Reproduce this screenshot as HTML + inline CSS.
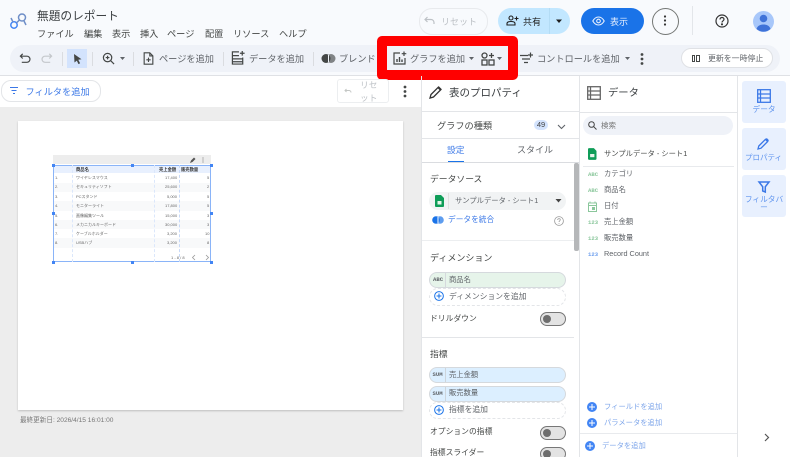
<!DOCTYPE html>
<html lang="ja"><head><meta charset="utf-8"><title>無題のレポート</title>
<style>
html,body{margin:0;padding:0;background:#fff}
body{width:790px;height:457px;overflow:hidden;position:relative;font-family:"Liberation Sans","Noto Sans CJK JP",sans-serif;color:#444746}
#w{position:absolute;left:0;top:0;width:790px;height:457px;overflow:hidden;background:#fff;filter:blur(.3px)}
.a{position:absolute}
.t{position:absolute;white-space:nowrap;line-height:14px;font-size:9.200px;color:#5f6368}
svg{position:absolute;overflow:visible}
.chip{position:absolute;left:429px;width:135px;height:14px;border-radius:8px;border:1px solid #d5d9dd}
.sw{position:absolute;left:540px;width:24px;height:12px;border-radius:7px;background:#e3e3e3;border:1px solid #777}
.sw i{position:absolute;left:2px;top:2px;width:8px;height:8px;border-radius:50%;background:#6e6e6e}
.row{position:absolute;left:53px;width:158px;height:9.500px}
.c{position:absolute;font-size:4px;line-height:9px;color:#666;white-space:nowrap}
.m{top:26.500px;color:#444746}
.f{font-size:7.300px}
.g{font-size:7.800px;color:#444746}
.k{font-size:5.600px;font-weight:bold;font-family:"Liberation Mono",monospace}
</style></head><body><div id="w">
<!-- header -->
<div class="a" style="left:0;top:0;width:790px;height:75px;background:#f8fafd"></div>
<div class="a" style="left:0;top:75px;width:790px;height:1px;background:#dfe1e5"></div>
<div class="a" style="left:10px;top:45px;width:770px;height:27px;border-radius:14px;background:#eff2f8"></div>
<svg style="left:10px;top:13px" width="17" height="16" viewBox="0 0 17 16" fill="none" stroke-width="1.500"><circle cx="4" cy="12" r="3.200" stroke="#4285f4"/><circle cx="12" cy="4.500" r="3.500" stroke="#6f8fc8"/><path d="M6.500 9.800L9.500 7" stroke="#6f8fc8"/><path d="M1 5l2 4M14 8l2 4" stroke="#6f8fc8"/></svg>
<div class="t" style="left:37px;top:10px;font-size:11.700px;color:#3c4043">無題のレポート</div>
<div class="t m" style="left:37px">ファイル</div>
<div class="t m" style="left:84px">編集</div>
<div class="t m" style="left:112px">表示</div>
<div class="t m" style="left:140px">挿入</div>
<div class="t m" style="left:167px">ページ</div>
<div class="t m" style="left:205px">配置</div>
<div class="t m" style="left:233px">リソース</div>
<div class="t m" style="left:279px">ヘルプ</div>

<!-- toolbar left -->
<svg style="left:19px;top:52px" width="13" height="13" viewBox="0 0 14 14" fill="none" stroke="#444746" stroke-width="1.300"><path d="M4 2L1.500 4.500 4 7M2 4.500h6.500a3.300 3.300 0 0 1 0 6.600H3"/></svg>
<svg style="left:40px;top:52px" width="13" height="13" viewBox="0 0 14 14" fill="none" stroke="#c4c7cb" stroke-width="1.300"><path d="M10 2l2.500 2.500L10 7M12 4.500H5.500a3.300 3.300 0 0 0 0 6.600H11"/></svg>
<div class="a" style="left:61.500px;top:52px;width:1px;height:14px;background:#dadce0"></div>
<div class="a" style="left:67px;top:49px;width:20px;height:19px;background:#d3e3fd"></div>
<svg style="left:73px;top:53px" width="10" height="12" viewBox="0 0 10 12"><path d="M1 1l7.500 5.200-3.200.6 1.800 3.500-1.600.8-1.700-3.500L1.500 9.500z" fill="#444746"/></svg>
<div class="a" style="left:92px;top:52px;width:1px;height:14px;background:#dadce0"></div>
<svg style="left:102px;top:52px" width="13" height="13" viewBox="0 0 14 14" fill="none" stroke="#444746" stroke-width="1.300"><circle cx="6" cy="6" r="4.500"/><path d="M9.500 9.500l3.500 3.500M4 6h4M6 4v4"/></svg>
<svg style="left:119px;top:56px" width="7" height="5" viewBox="0 0 7 5"><path d="M1 1h5L3.500 4z" fill="#5f6368"/></svg>
<div class="a" style="left:133px;top:52px;width:1px;height:14px;background:#dadce0"></div>
<svg style="left:143px;top:52px" width="11" height="13" viewBox="0 0 12 15" fill="none" stroke="#444746" stroke-width="1.300"><path d="M1 1h6.500L11 4.500V14H1zM7.500 1v3.500H11M6 6.500v5M3.500 9h5"/></svg>
<div class="t" style="left:159px;top:51.500px">ページを追加</div>
<div class="a" style="left:223px;top:52px;width:1px;height:14px;background:#dadce0"></div>
<svg style="left:231px;top:50px" width="15" height="15" viewBox="0 0 15 16" fill="none" stroke="#444746" stroke-width="1.300"><path d="M8 2H1v13h11V8M1 6h7M1 9.500h11M1 12.500h11M11.500 1v5M9 3.500h5"/></svg>
<div class="t" style="left:249px;top:51.500px">データを追加</div>
<div class="a" style="left:313px;top:52px;width:1px;height:14px;background:#dadce0"></div>
<svg style="left:321px;top:53px" width="15" height="11" viewBox="0 0 15 11"><circle cx="5" cy="5.500" r="4.500" fill="#444746"/><circle cx="10" cy="5.500" r="4.500" fill="#444746" opacity=".65"/><path d="M7.500 2v7" stroke="#f0f4f9" stroke-width="1"/></svg>
<div class="t" style="left:339px;top:51.500px">ブレンド</div>

<!-- highlight -->
<div class="a" style="left:377px;top:36px;width:141px;height:44px;background:#f00;border-radius:5px"></div>
<div class="a" style="left:387px;top:46px;width:121px;height:24px;background:#eff2f8"></div>
<svg style="left:393px;top:51px" width="14" height="14" viewBox="0 0 14 14" fill="none" stroke="#444746" stroke-width="1.200"><path d="M7 2H1v11h11V7M11 .5v4.500M8.700 2.700h4.600"/><path d="M4 11V8M6.500 11V6M9 11V8.500" stroke-width="1.400"/></svg>
<div class="t" style="left:410px;top:51.500px">グラフを追加</div>
<svg style="left:468px;top:56px" width="7" height="5" viewBox="0 0 7 5"><path d="M1 1h5L3.500 4z" fill="#5f6368"/></svg>
<svg style="left:481px;top:52px" width="14" height="14" viewBox="0 0 14 14" fill="none" stroke="#444746" stroke-width="1.300"><circle cx="3.500" cy="3.500" r="2.500"/><rect x="1" y="8" width="5" height="5"/><rect x="8" y="8" width="5" height="5"/><path d="M10.500 1v5M8 3.500h5"/></svg>
<svg style="left:496px;top:56px" width="7" height="5" viewBox="0 0 7 5"><path d="M1 1h5L3.500 4z" fill="#5f6368"/></svg>

<!-- toolbar right -->
<svg style="left:519px;top:51px" width="14" height="14" viewBox="0 0 14 14" fill="none" stroke="#444746" stroke-width="1.200"><path d="M1 4.500h8M3 8h8M5 11.500h4M11.500 1.500v5M9 4h5"/></svg>
<div class="t" style="left:537px;top:51.500px">コントロールを追加</div>
<svg style="left:624px;top:56px" width="7" height="5" viewBox="0 0 7 5"><path d="M1 1h5L3.500 4z" fill="#5f6368"/></svg>
<svg style="left:640px;top:52px" width="4" height="14" viewBox="0 0 4 14" fill="#444746"><circle cx="2" cy="2.500" r="1.400"/><circle cx="2" cy="7" r="1.400"/><circle cx="2" cy="11.500" r="1.400"/></svg>
<div class="a" style="left:681px;top:48px;width:90px;height:18px;border-radius:11px;background:#fff;border:1px solid #dfe1e5"></div>
<div class="a" style="left:691.500px;top:55px;width:1.500px;height:5px;border:1px solid #444746"></div>
<div class="a" style="left:696px;top:55px;width:1.500px;height:5px;border:1px solid #444746"></div>
<div class="t" style="left:708px;top:52px;font-size:7.900px;color:#5f6368">更新を一時停止</div>

<!-- header right -->
<div class="a" style="left:419px;top:8px;width:67px;height:25px;border-radius:13px;border:1px solid #e8eaed"></div>
<svg style="left:424px;top:16px" width="11" height="9" viewBox="0 0 11 9" fill="none" stroke="#bdc1c6" stroke-width="1.200"><path d="M3.500 1L1 3.500 3.500 6M1.500 3.500H7a3 3 0 0 1 3 3V8"/></svg>
<div class="t" style="left:441px;top:15px;color:#bdc1c6;font-size:9px">リセット</div>
<div class="a" style="left:498px;top:8px;width:72px;height:26px;border-radius:13px;background:#c2e7ff"></div>
<div class="a" style="left:549px;top:8px;width:1px;height:26px;background:#b3dcf5"></div>
<svg style="left:506px;top:15px" width="13" height="11" viewBox="0 0 13 11" fill="none" stroke="#1f1f1f" stroke-width="1.100"><circle cx="5" cy="3" r="2"/><path d="M1 10V8.500C1 7 3 6.500 5 6.500S9 7 9 8.500V10zM10.500 1.500v4M8.500 3.500h4"/></svg>
<div class="t" style="left:523px;top:14.500px;color:#1f1f1f;font-size:9px">共有</div>
<svg style="left:555px;top:19px" width="8" height="5" viewBox="0 0 8 5"><path d="M1 .5h6L4 4z" fill="#1f1f1f"/></svg>
<div class="a" style="left:581px;top:8px;width:63px;height:26px;border-radius:13px;background:#1a73e8"></div>
<svg style="left:592px;top:16px" width="13" height="10" viewBox="0 0 13 10" fill="none" stroke="#e8f0fe" stroke-width="1.100"><path d="M.8 5C2.500 2 4.500 1 6.500 1s4 1 5.700 4c-1.700 3-3.700 4-5.700 4S2.500 8 .8 5z"/><circle cx="6.500" cy="5" r="1.800"/></svg>
<div class="t" style="left:610px;top:14.500px;color:#e8f0fe;font-size:9px">表示</div>
<div class="a" style="left:652px;top:8px;width:25px;height:25px;border-radius:50%;border:1px solid #747775"></div>
<svg style="left:663px;top:15px" width="4" height="11" viewBox="0 0 4 11" fill="#333"><circle cx="2" cy="1.500" r="1.100"/><circle cx="2" cy="5.500" r="1.100"/><circle cx="2" cy="9.500" r="1.100"/></svg>
<div class="a" style="left:692px;top:6px;width:1px;height:29px;background:#e3e6ea"></div>
<svg style="left:715px;top:14px" width="14" height="14" viewBox="0 0 14 14" fill="none" stroke="#333" stroke-width="1.200"><circle cx="7" cy="7" r="6"/><path d="M5 5.500C5 4 6 3.500 7 3.500S9 4.200 9 5.300C9 6.800 7 6.800 7 8.500"/><circle cx="7" cy="10.300" r=".5" fill="#333"/></svg>
<svg style="left:753px;top:11px" width="21" height="21" viewBox="0 0 21 21"><circle cx="10.500" cy="10.500" r="10.500" fill="#a8c7fa"/><circle cx="10.500" cy="7.500" r="3.800" fill="#3f72d8"/><path d="M3.500 18c1-3.500 4-4.500 7-4.500s6 1 7 4.500a10.500 10.500 0 0 1-14 0z" fill="#3f72d8"/></svg>

<!-- filter bar -->
<div class="a" style="left:1px;top:80px;width:98px;height:20px;border-radius:10px;border:1px solid #e3e5e8;background:#fff"></div>
<svg style="left:9px;top:86px" width="10" height="9" viewBox="0 0 10 9" fill="none" stroke="#3b78e7" stroke-width="1.100"><path d="M1 1.500h8M2.500 4.500h5M4 7.500h2"/></svg>
<div class="t" style="left:25.500px;top:84.500px;color:#3b78e7">フィルタを追加</div>
<div class="a" style="left:337px;top:79px;width:50px;height:22px;border:1px solid #eceef0;border-radius:3px"></div>
<svg style="left:344px;top:88px" width="8" height="6" viewBox="0 0 8 6" fill="none" stroke="#c4c7c5" stroke-width="1"><path d="M2.500 1L1 2.500 2.500 4M1 2.500h4a2 2 0 0 1 2 2"/></svg>
<div class="t" style="left:360px;top:79px;color:#bdc1c6;font-size:8.700px;line-height:13px;width:19px;white-space:normal">リセット</div>
<svg style="left:403px;top:85px" width="4" height="13" viewBox="0 0 4 13" fill="#444746"><circle cx="2" cy="2" r="1.400"/><circle cx="2" cy="6.500" r="1.400"/><circle cx="2" cy="11" r="1.400"/></svg>

<!-- canvas -->
<div class="a" style="left:0;top:107px;width:421px;height:350px;background:#ededed"></div>
<div class="a" style="left:18px;top:121px;width:385px;height:289px;background:#fff;box-shadow:0 1px 2px rgba(0,0,0,.2)"></div>
<div class="t" style="left:20px;top:414px;font-size:6.600px;color:#777">最終更新日: 2026/4/15 16:01:00</div>

<!-- table -->
<div class="a" style="left:53px;top:155px;width:158px;height:9px;background:#ededed"></div>
<svg style="left:190px;top:157px" width="6" height="6" viewBox="0 0 6 6"><path d="M0 6l1-2.500L4 .5 5.500 2 2.500 5z" fill="#555"/></svg>
<svg style="left:202px;top:157px" width="2" height="6" viewBox="0 0 2 6" fill="#888"><circle cx="1" cy="1" r=".6"/><circle cx="1" cy="3" r=".6"/><circle cx="1" cy="5" r=".6"/></svg>
<div class="row" style="top:165px;height:8px;background:#e8f0fe"></div>
<div class="row" style="top:182.500px;background:#f8f9fa"></div>
<div class="row" style="top:201px;background:#f8f9fa"></div>
<div class="row" style="top:219.500px;background:#f8f9fa"></div>
<div class="row" style="top:238px;background:#f8f9fa"></div>
<div class="c" style="left:76px;top:164.500px;color:#333;font-weight:bold;font-size:4.300px">商品名</div>
<div class="c" style="left:159px;top:164.500px;color:#333;font-weight:bold;font-size:4.300px">売上金額</div>
<div class="c" style="left:181px;top:164.500px;color:#333;font-weight:bold;font-size:4.300px">販売数量</div>
<div class="c" style="left:55px;top:173px">1.</div><div class="c" style="left:76px;top:173px">ワイヤレスマウス</div><div class="c" style="left:165px;top:173px">17,400</div><div class="c" style="left:207px;top:173px">5</div>
<div class="c" style="left:55px;top:182px">2.</div><div class="c" style="left:76px;top:182px">セキュリティソフト</div><div class="c" style="left:165px;top:182px">25,600</div><div class="c" style="left:207px;top:182px">2</div>
<div class="c" style="left:55px;top:192px">3.</div><div class="c" style="left:76px;top:192px">PCスタンド</div><div class="c" style="left:167px;top:192px">5,000</div><div class="c" style="left:207px;top:192px">5</div>
<div class="c" style="left:55px;top:201px">4.</div><div class="c" style="left:76px;top:201px">モニターライト</div><div class="c" style="left:165px;top:201px">17,800</div><div class="c" style="left:207px;top:201px">5</div>
<div class="c" style="left:55px;top:211px">5.</div><div class="c" style="left:76px;top:211px">画像編集ツール</div><div class="c" style="left:165px;top:211px">15,000</div><div class="c" style="left:207px;top:211px">3</div>
<div class="c" style="left:55px;top:220px">6.</div><div class="c" style="left:76px;top:220px">メカニカルキーボード</div><div class="c" style="left:165px;top:220px">30,000</div><div class="c" style="left:207px;top:220px">3</div>
<div class="c" style="left:55px;top:229px">7.</div><div class="c" style="left:76px;top:229px">ケーブルホルダー</div><div class="c" style="left:167px;top:229px">3,200</div><div class="c" style="left:205px;top:229px">10</div>
<div class="c" style="left:55px;top:238px">8.</div><div class="c" style="left:76px;top:238px">USBハブ</div><div class="c" style="left:167px;top:238px">3,200</div><div class="c" style="left:207px;top:238px">8</div>
<div class="c" style="left:171px;top:253px">1 - 8 / 8</div>
<svg style="left:191px;top:254px" width="20" height="7" viewBox="0 0 20 7" fill="none" stroke="#999" stroke-width=".8"><path d="M4 1L1.500 3.500 4 6M15 1l2.500 2.500L15 6"/></svg>
<div class="a" style="left:53px;top:165px;width:158px;height:97px;border:1px solid #8ab4f8;box-sizing:border-box"></div>
<div class="a" style="left:72px;top:165px;height:97px;border-left:1px dashed #dbe7fb"></div>
<div class="a" style="left:154px;top:165px;height:97px;border-left:1px dashed #dbe7fb"></div>
<div class="a" style="left:179px;top:165px;height:97px;border-left:1px dashed #c7d9f8"></div>
<div class="a" style="left:51.500px;top:163.500px;width:3px;height:3px;background:#4285f4"></div>
<div class="a" style="left:130.500px;top:163.500px;width:3px;height:3px;background:#4285f4"></div>
<div class="a" style="left:209.500px;top:163.500px;width:3px;height:3px;background:#4285f4"></div>
<div class="a" style="left:51.500px;top:212px;width:3px;height:3px;background:#4285f4"></div>
<div class="a" style="left:209.500px;top:212px;width:3px;height:3px;background:#4285f4"></div>
<div class="a" style="left:51.500px;top:260.500px;width:3px;height:3px;background:#4285f4"></div>
<div class="a" style="left:130.500px;top:260.500px;width:3px;height:3px;background:#4285f4"></div>
<div class="a" style="left:209.500px;top:260.500px;width:3px;height:3px;background:#4285f4"></div>

<!-- properties panel -->
<div class="a" style="left:421px;top:76px;width:1px;height:381px;background:#e3e5e8"></div>
<div class="a" style="left:579px;top:76px;width:1px;height:381px;background:#e3e5e8"></div>
<svg style="left:429px;top:85px" width="14" height="14" viewBox="0 0 14 14"><path d="M1 13l1-3.500L9.500 2 12 4.500 4.500 12z" fill="none" stroke="#333" stroke-width="1.300"/><path d="M8.500 3l2.500 2.500 1.500-1.500L10 1.500z" fill="#333"/></svg>
<div class="t" style="left:449px;top:86px;font-size:10.500px;color:#3c4043">表のプロパティ</div>
<div class="a" style="left:422px;top:111px;width:157px;height:1px;background:#e3e5e8"></div>
<div class="t" style="left:437px;top:118.500px;color:#444746">グラフの種類</div>
<div class="a" style="left:534px;top:120px;width:14px;height:10px;border-radius:6px;background:#d3e3fd;font-size:7.500px;line-height:10px;text-align:center;color:#444">49</div>
<svg style="left:557px;top:124px" width="9" height="6" viewBox="0 0 9 6" fill="none" stroke="#5f6368" stroke-width="1.100"><path d="M1 1l3.500 3.500L8 1"/></svg>
<div class="a" style="left:422px;top:138px;width:157px;height:1px;background:#e3e5e8"></div>
<div class="t" style="left:447px;top:142.500px;font-size:8.800px;color:#3b78e7">設定</div>
<div class="t" style="left:517px;top:142.500px;font-size:9px;color:#5f6368">スタイル</div>
<div class="a" style="left:448px;top:160.500px;width:16px;height:2px;background:#1a73e8"></div>
<div class="a" style="left:422px;top:162px;width:157px;height:1px;background:#dadce0"></div>
<div class="a" style="left:574px;top:163px;width:5px;height:88px;background:#b5b7b9;border-radius:2px"></div>
<div class="t" style="left:430px;top:171.500px;font-size:8.800px;color:#444746">データソース</div>
<div class="a" style="left:429px;top:192px;width:137px;height:18px;border-radius:9px;background:#f1f3f4"></div>
<div class="a" style="left:448px;top:193px;width:1px;height:16px;background:#e0e0e0"></div>
<svg style="left:435px;top:195px" width="9" height="12" viewBox="0 0 9 12"><path d="M0 1a1 1 0 0 1 1-1h5l3 3v8a1 1 0 0 1-1 1H1a1 1 0 0 1-1-1z" fill="#0f9d58"/><rect x="2.500" y="6" width="4" height="3.500" fill="#e6f4ea"/></svg>
<div class="t f" style="left:455px;top:194px;color:#5f6368">サンプルデータ - シート1</div>
<svg style="left:555px;top:199px" width="7" height="4" viewBox="0 0 7 4"><path d="M.5 0h6L3.500 3.500z" fill="#444"/></svg>
<svg style="left:432px;top:216px" width="12" height="8" viewBox="0 0 12 8"><circle cx="4" cy="4" r="3.800" fill="#1a73e8"/><circle cx="8" cy="4" r="3.800" fill="#1a73e8" opacity=".7"/><path d="M6 1v6" stroke="#fff"/></svg>
<div class="t" style="left:448px;top:213px;font-size:7.700px;color:#3b78e7">データを統合</div>
<svg style="left:554px;top:216px" width="10" height="10" viewBox="0 0 10 10" fill="none" stroke="#999" stroke-width=".8"><circle cx="5" cy="5" r="4.400"/><path d="M3.700 4C3.700 3 4.300 2.600 5 2.600S6.300 3 6.300 3.800C6.300 4.800 5 4.800 5 6M5 7v.8"/></svg>
<div class="a" style="left:422px;top:240px;width:152px;height:1px;background:#eceef0"></div>
<div class="t" style="left:430px;top:251px;font-size:9px;color:#444746">ディメンション</div>
<div class="chip" style="top:272px;background:#e6f4ea"></div>
<div class="a" style="left:445px;top:273px;width:1px;height:14px;background:#d5d9dd"></div>
<div class="t k" style="left:433px;top:273px;color:#5f6368">ABC</div>
<div class="t f" style="left:449px;top:272.500px;color:#5f6368">商品名</div>
<div class="a" style="left:429px;top:288px;width:135px;height:15.500px;border-radius:9px;border:1px dashed #e3e5e8"></div>
<svg style="left:434px;top:291px" width="10" height="10" viewBox="0 0 11 11" fill="none" stroke="#1a73e8" stroke-width="1.100"><circle cx="5.500" cy="5.500" r="4.800"/><path d="M5.500 2.800v5.400M2.800 5.500h5.400"/></svg>
<div class="t g" style="left:449px;top:289.500px;color:#5f6368">ディメンションを追加</div>
<div class="t g" style="left:430px;top:311.500px">ドリルダウン</div>
<div class="sw" style="top:312px"><i></i></div>
<div class="a" style="left:422px;top:336.500px;width:152px;height:1px;background:#e3e5e8"></div>
<div class="t" style="left:430px;top:346.500px;font-size:8.800px;color:#444746">指標</div>
<div class="chip" style="top:367px;background:#dcefff"></div>
<div class="a" style="left:445px;top:368px;width:1px;height:14px;background:#cdd5dc"></div>
<div class="t k" style="left:432.500px;top:368px;color:#5f6368">SUM</div>
<div class="t f" style="left:449px;top:367.500px;color:#5f6368">売上金額</div>
<div class="chip" style="top:385.500px;background:#dcefff"></div>
<div class="a" style="left:445px;top:386.500px;width:1px;height:14px;background:#cdd5dc"></div>
<div class="t k" style="left:432.500px;top:386.500px;color:#5f6368">SUM</div>
<div class="t f" style="left:449px;top:386px;color:#5f6368">販売数量</div>
<div class="a" style="left:429px;top:402px;width:135px;height:15px;border-radius:9px;border:1px dashed #e3e5e8"></div>
<svg style="left:434px;top:405px" width="10" height="10" viewBox="0 0 11 11" fill="none" stroke="#1a73e8" stroke-width="1.100"><circle cx="5.500" cy="5.500" r="4.800"/><path d="M5.500 2.800v5.400M2.800 5.500h5.400"/></svg>
<div class="t g" style="left:449px;top:403px;color:#5f6368">指標を追加</div>
<div class="t g" style="left:430px;top:425px">オプションの指標</div>
<div class="sw" style="top:426px"><i></i></div>
<div class="t g" style="left:430px;top:446px">指標スライダー</div>
<div class="sw" style="top:447px"><i></i></div>

<!-- data panel -->
<div class="a" style="left:737px;top:76px;width:1px;height:381px;background:#e3e5e8"></div>
<svg style="left:587px;top:86px" width="14" height="14" viewBox="0 0 14 14" fill="none" stroke="#666" stroke-width="1.300"><rect x=".7" y=".7" width="12.600" height="12.600"/><path d="M.7 5h12.600M.7 9h12.600M3.500 .7v12.600"/></svg>
<div class="t" style="left:608px;top:87px;font-size:10.300px;color:#3c4043">データ</div>
<div class="a" style="left:580px;top:111.500px;width:157px;height:1px;background:#e3e5e8"></div>
<div class="a" style="left:583px;top:116px;width:150px;height:19px;border-radius:10px;background:#eff2f8"></div>
<svg style="left:588px;top:121px" width="9" height="9" viewBox="0 0 9 9" fill="none" stroke="#444" stroke-width="1"><circle cx="3.500" cy="3.500" r="2.800"/><path d="M5.700 5.700L8.500 8.500"/></svg>
<div class="t" style="left:601px;top:119px;font-size:7.500px;color:#757575">検索</div>
<svg style="left:587.500px;top:148px" width="8.500" height="12" viewBox="0 0 8 11"><path d="M0 1a1 1 0 0 1 1-1h4.500L8 2.500V10a1 1 0 0 1-1 1H1a1 1 0 0 1-1-1z" fill="#0f9d58"/><rect x="2" y="5.500" width="4" height="3" fill="#e6f4ea"/></svg>
<div class="t f" style="left:604px;top:147px;color:#444746">サンプルデータ - シート1</div>
<div class="a" style="left:583px;top:165.500px;width:151px;height:1px;background:#e8eaed"></div>
<div class="t k" style="left:588px;top:168px;color:#8bc79c">ABC</div>
<div class="t f" style="left:604px;top:167px">カテゴリ</div>
<div class="t k" style="left:588px;top:184px;color:#8bc79c">ABC</div>
<div class="t f" style="left:604px;top:183px">商品名</div>
<svg style="left:588px;top:201px" width="9" height="11" viewBox="0 0 9 11" fill="none" stroke="#8bc79c" stroke-width="1"><rect x=".5" y="2" width="8" height="8.500"/><path d="M.5 4.500h8M2 .5V2M7 .5V2"/><rect x="4.500" y="6.500" width="2" height="2" fill="#8bc79c"/></svg>
<div class="t f" style="left:604px;top:199px">日付</div>
<div class="t k" style="left:588px;top:215.500px;color:#8bc79c">123</div>
<div class="t f" style="left:604px;top:215px">売上金額</div>
<div class="t k" style="left:588px;top:231.500px;color:#8bc79c">123</div>
<div class="t f" style="left:604px;top:231px">販売数量</div>
<div class="t k" style="left:588px;top:247.500px;color:#6fa0ee">123</div>
<div class="t f" style="left:604px;top:247px">Record Count</div>

<svg style="left:587px;top:402px" width="10" height="10" viewBox="0 0 10 10"><circle cx="5" cy="5" r="5" fill="#4285f4"/><path d="M5 2v6M2 5h6" stroke="#fff" stroke-width="1"/></svg>
<div class="t f" style="left:604px;top:400px;color:#7da5ea">フィールドを追加</div>
<svg style="left:587px;top:418px" width="10" height="10" viewBox="0 0 10 10"><circle cx="5" cy="5" r="5" fill="#4285f4"/><path d="M5 2v6M2 5h6" stroke="#fff" stroke-width="1"/></svg>
<div class="t f" style="left:604px;top:416px;color:#7da5ea">パラメータを追加</div>
<div class="a" style="left:580px;top:433px;width:157px;height:1px;background:#e8eaed"></div>
<svg style="left:585px;top:441px" width="10" height="10" viewBox="0 0 10 10"><circle cx="5" cy="5" r="5" fill="#4285f4"/><path d="M5 2v6M2 5h6" stroke="#fff" stroke-width="1"/></svg>
<div class="t f" style="left:602px;top:439px;color:#7da5ea">データを追加</div>

<!-- right rail -->
<div class="a" style="left:742px;top:81px;width:44px;height:42px;border-radius:3px;background:#e8f0fe"></div>
<svg style="left:757px;top:89px" width="14" height="14" viewBox="0 0 14 14" fill="none" stroke="#3b78e7" stroke-width="1.300"><rect x=".7" y=".7" width="12.600" height="12.600"/><path d="M.7 5h12.600M.7 9h12.600M3.500 .7v12.600"/></svg>
<div class="t" style="left:752.500px;top:102.500px;font-size:7.700px;color:#5e93ee">データ</div>
<div class="a" style="left:742px;top:128px;width:44px;height:42px;border-radius:3px;background:#e8f0fe"></div>
<svg style="left:757px;top:137px" width="13" height="13" viewBox="0 0 13 13"><path d="M1 12l.8-3L8.500 2.300 10.700 4.500 4 11.200z" fill="none" stroke="#3b78e7" stroke-width="1.300"/><path d="M8 2.800l2.200 2.200 1.800-1.800L9.800 1z" fill="#3b78e7"/></svg>
<div class="t" style="left:745px;top:150.500px;font-size:7.500px;color:#5e93ee">プロパティ</div>
<div class="a" style="left:742px;top:175px;width:44px;height:42px;border-radius:3px;background:#e8f0fe"></div>
<svg style="left:758px;top:181px" width="12" height="12" viewBox="0 0 12 12"><path d="M1 1h10L7.300 5.800V11L4.700 10V5.800z" fill="none" stroke="#3b78e7" stroke-width="1.500"/></svg>
<div class="t" style="left:744px;top:196px;width:40px;font-size:7.700px;line-height:8px;color:#5e93ee;white-space:normal;text-align:center">フィルタバー</div>
<svg style="left:764px;top:433px" width="6" height="9" viewBox="0 0 6 9" fill="none" stroke="#555" stroke-width="1.200"><path d="M1 1l3.500 3.500L1 8"/></svg>
</div></body></html>
